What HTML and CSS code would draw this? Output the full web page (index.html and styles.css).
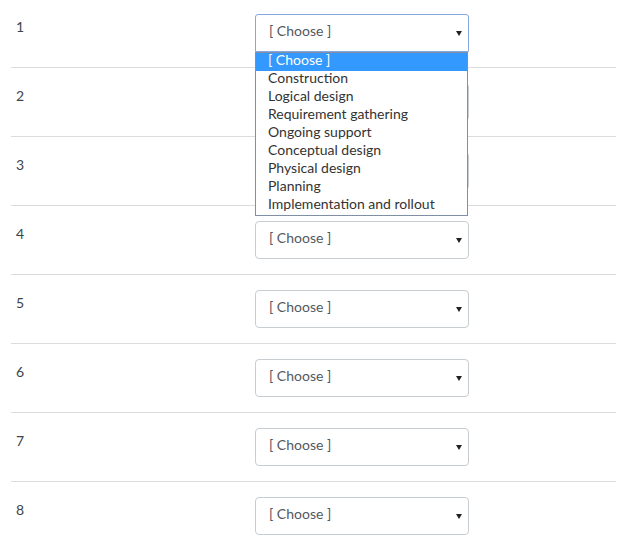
FILE: index.html
```html
<!DOCTYPE html>
<html lang="en">

<head>
    <meta charset="UTF-8">
    <title>Matching</title>
    <link rel="stylesheet" href="styles.css">
</head>

<body>
    <div class="questions">
        <div class="row">
            <div class="num">1</div>
            <div class="pick open">
                <div class="box"><span>[ Choose ]</span><svg class="arrow" width="6" height="5" viewBox="0 0 6 5"><path d="M0 0h6L3 5z" /></svg></div>
                <ul class="menu">
                    <li class="sel">[ Choose ]</li>
                    <li>Construction</li>
                    <li>Logical design</li>
                    <li>Requirement gathering</li>
                    <li>Ongoing support</li>
                    <li>Conceptual design</li>
                    <li>Physical design</li>
                    <li>Planning</li>
                    <li>Implementation and rollout</li>
                </ul>
            </div>
        </div>
        <div class="row">
            <div class="num">2</div>
            <div class="pick"><div class="box"><span>[ Choose ]</span><svg class="arrow" width="6" height="5" viewBox="0 0 6 5"><path d="M0 0h6L3 5z" /></svg></div></div>
        </div>
        <div class="row">
            <div class="num">3</div>
            <div class="pick"><div class="box"><span>[ Choose ]</span><svg class="arrow" width="6" height="5" viewBox="0 0 6 5"><path d="M0 0h6L3 5z" /></svg></div></div>
        </div>
        <div class="row">
            <div class="num">4</div>
            <div class="pick"><div class="box"><span>[ Choose ]</span><svg class="arrow" width="6" height="5" viewBox="0 0 6 5"><path d="M0 0h6L3 5z" /></svg></div></div>
        </div>
        <div class="row">
            <div class="num">5</div>
            <div class="pick"><div class="box"><span>[ Choose ]</span><svg class="arrow" width="6" height="5" viewBox="0 0 6 5"><path d="M0 0h6L3 5z" /></svg></div></div>
        </div>
        <div class="row">
            <div class="num">6</div>
            <div class="pick"><div class="box"><span>[ Choose ]</span><svg class="arrow" width="6" height="5" viewBox="0 0 6 5"><path d="M0 0h6L3 5z" /></svg></div></div>
        </div>
        <div class="row">
            <div class="num">7</div>
            <div class="pick"><div class="box"><span>[ Choose ]</span><svg class="arrow" width="6" height="5" viewBox="0 0 6 5"><path d="M0 0h6L3 5z" /></svg></div></div>
        </div>
        <div class="row">
            <div class="num">8</div>
            <div class="pick"><div class="box"><span>[ Choose ]</span><svg class="arrow" width="6" height="5" viewBox="0 0 6 5"><path d="M0 0h6L3 5z" /></svg></div></div>
        </div>
    </div>
</body>

</html>
```

FILE: styles.css
```css
* {
    margin: 0;
    padding: 0;
    box-sizing: border-box;
}

body {
    background: #fff;
    font-family: 'Lato', 'Open Sans', sans-serif;
    font-size: 14px;
    color: #3d454c;
}

.questions {
    margin: -1px 20px 0 11px;
}

.row {
    display: flex;
    align-items: flex-start;
    padding: 15px 0;
    border-top: 1px solid #dcdcdc;
}

.row:first-child {
    border-top: none;
}

.num {
    width: 244px;
    padding: 3px 0 0 5px;
    line-height: 20px;
    font-size: 14px;
}

.pick {
    position: relative;
}

.box {
    width: 214px;
    height: 38px;
    display: flex;
    align-items: center;
    justify-content: space-between;
    padding: 0 6px 5px 13px;
    border: 1px solid #c7cdd1;
    border-radius: 4px;
    background: #fff;
    color: #52595f;
}

.box .arrow {
    margin-top: 5px;
}

.open .box {
    border-color: #86a8de;
    border-radius: 3px 3px 0 0;
}

.arrow {
    fill: #222;
}

.menu {
    position: absolute;
    top: 38px;
    left: 0;
    width: 213px;
    list-style: none;
    background: #fff;
    border: 1px solid #7e8fa6;
    z-index: 2;
}

.menu li {
    height: 18px;
    line-height: 14px;
    padding-left: 12px;
    color: #333;
    white-space: nowrap;
}

.menu .sel {
    background: #3399ff;
    color: #fff;
}
```
